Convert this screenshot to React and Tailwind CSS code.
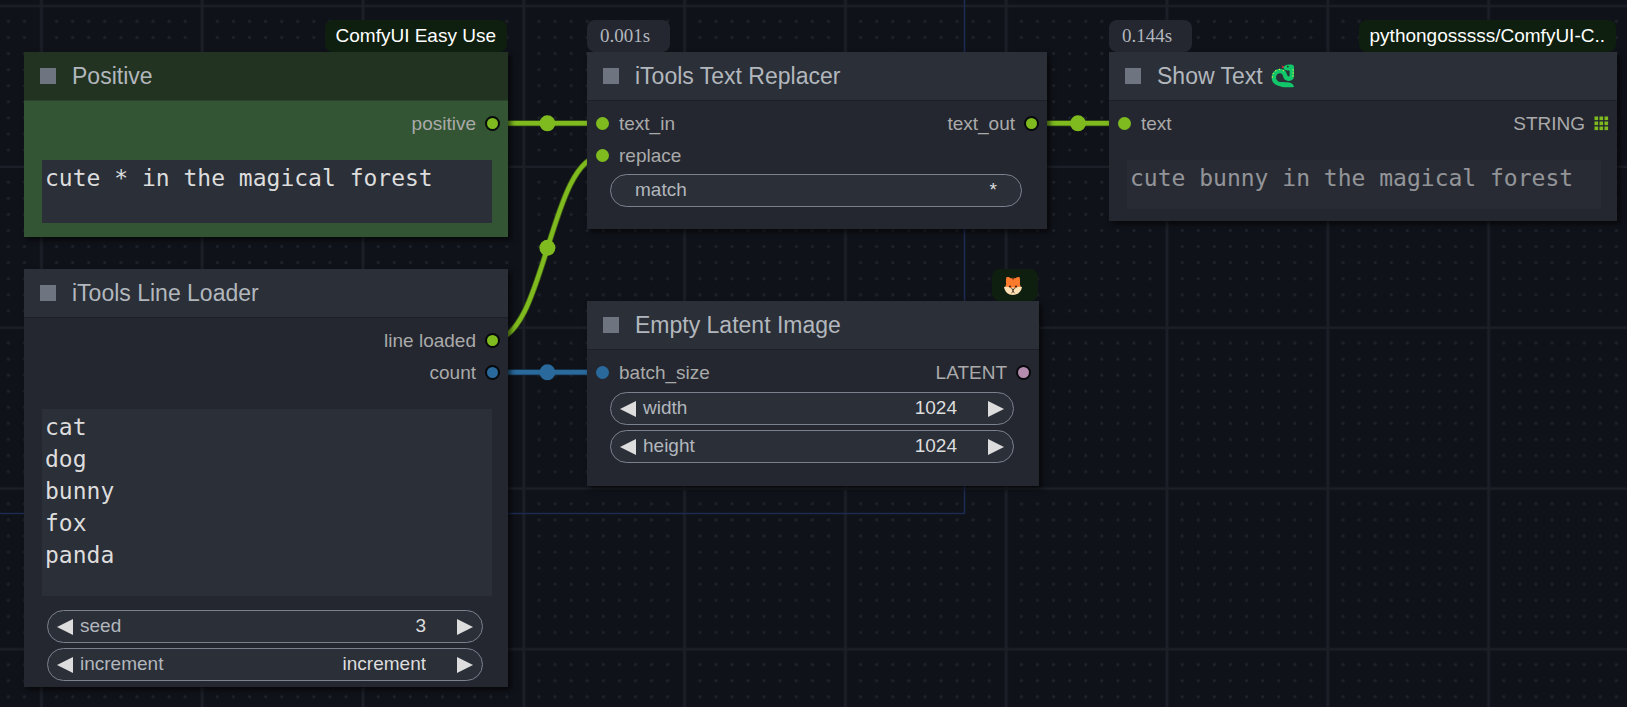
import React, { useId, useState } from "react";

const DOT_COORDS = Array.from({ length: 9 }, (_, i) => 15.2 + i * 16.08);

function CanvasGrid() {
  return (
    <svg className="absolute inset-0 h-full w-full" aria-hidden="true">
      <defs>
        <pattern id="grid" x="41.4" y="6.2" width="160.8" height="160.8" patternUnits="userSpaceOnUse">
          <rect x="0" y="0" width="160.8" height="1.1" fill="#1c1f27" />
          <rect x="0" y="159.5" width="160.8" height="1.3" fill="#1c1f27" />
          <rect x="0" y="0" width="1.4" height="160.8" fill="#1c1f27" />
          <rect x="159.4" y="0" width="1.4" height="160.8" fill="#1c1f27" />
          {DOT_COORDS.map((y) =>
            DOT_COORDS.map((x) => <circle key={`${x}-${y}`} cx={x} cy={y} r="1.6" fill="#1f2229" />)
          )}
        </pattern>
      </defs>
      <rect width="100%" height="100%" fill="url(#grid)" />
      <path d="M964.5 0V513.5H0" fill="none" stroke="#1e2b50" strokeWidth="1.6" />
    </svg>
  );
}

function Link({ d, cx, cy, color, edge }) {
  return (
    <g>
      <path d={d} fill="none" stroke={edge} strokeWidth="6" />
      <path d={d} fill="none" stroke={color} strokeWidth="4.4" />
      <circle cx={cx} cy={cy} r="8" fill={color} />
    </g>
  );
}

function Links() {
  return (
    <svg className="absolute inset-0 h-full w-full" aria-hidden="true">
      <Link d="M492 123.3H603" cx="547.4" cy="123.3" color="#7fbb1f" edge="#3d5a14" />
      <Link d="M492 340.3C546 340.3 549 155.5 603 155.5" cx="547.4" cy="247.8" color="#7fbb1f" edge="#3d5a14" />
      <Link d="M492 372.3H603" cx="547.4" cy="372.3" color="#29699c" edge="#1a3a55" />
      <Link d="M1030 123.3H1125" cx="1078" cy="123.3" color="#7fbb1f" edge="#3d5a14" />
    </svg>
  );
}

function Snake() {
  return (
    <svg viewBox="0 0 24 24" className="h-6 w-6" role="img" aria-label="snake">
      <path d="M13.5 2.2 10.4 1.6 11.6 3 10.2 4.2 14 3.8Z" fill="#d3273e" />
      <path d="M20.8 4V11.5C20.8 15.6 15 15.8 14.2 11.8C13.4 8 11.5 6.8 8.6 7C4.6 7.4 2.6 10.6 2.9 14.2C3.4 18.4 7.4 20.6 12 20.4" fill="none" stroke="#12c66a" strokeWidth="4.4" strokeLinecap="round" />
      <path d="M10.500 18C14 18.400 18 17.800 20.500 19.200C22 20.200 22.800 21.600 23 23C18 23.600 13 23.400 9.500 22.400Z" fill="#12c66a" />
      <path d="M12.600 3.600C13 1.200 15.500.4 18 .4H20C22 .4 23 1.400 23 3.400V6.400H15.800C13.800 6.200 12.400 5.400 12.600 3.600Z" fill="#12c66a" />
      <circle cx="16.800" cy="2.600" r=".9" fill="#17352a" />
      <g fill="#e8e64a">
        <circle cx="22.200" cy="6" r=".7" />
        <circle cx="22.200" cy="9" r=".7" />
        <circle cx="22" cy="12" r=".7" />
        <circle cx="8.500" cy="5.400" r=".7" />
        <circle cx="4.800" cy="6.800" r=".7" />
        <circle cx="2.200" cy="9.600" r=".7" />
        <circle cx="1.400" cy="13" r=".7" />
        <circle cx="12.400" cy="6.600" r=".7" />
      </g>
    </svg>
  );
}

function Fox() {
  return (
    <svg viewBox="0 0 20 20" className="mr-1 h-5 w-5" role="img" aria-label="fox">
      <path d="M3.400 1.200C5 .6 6.600 1.200 7.600 2.200H12.400C13.400 1.200 15 .6 16.600 1.200C17.200 3 17.100 6 16.900 8L18 12H2L3.100 8C2.900 6 2.800 3 3.400 1.200Z" fill="#fb7a2c" />
      <path d="M8.600 1.800H11.400L10 4.400Z" fill="#8c3a18" />
      <path d="M1 11C3.500 10.500 6.500 10.600 8.400 12.800L10 10.800 11.600 12.800C13.500 10.600 16.500 10.500 19 11C18.200 16 14.600 19 10 19S1.800 16 1 11Z" fill="#fde0b4" />
      <circle cx="7" cy="10.400" r="1" fill="#2c1b14" />
      <circle cx="13" cy="10.400" r="1" fill="#2c1b14" />
      <path d="M8.400 12.800H11.600L10 14.600Z" fill="#2c1b14" />
      <path d="M10 14V15.400M10 15.400 8.500 16.800M10 15.400 11.500 16.800" stroke="#2c1b14" strokeWidth="1" fill="none" />
    </svg>
  );
}

function TimeBadge({ children }) {
  return (
    <span className="flex h-8 items-center rounded-lg bg-[#242730] pr-5 pl-[13px] font-['Liberation_Serif',serif] text-[19px] text-[#b2b7bd]">
      {children}
    </span>
  );
}

function SourceBadge({ children }) {
  return (
    <span className="mr-px ml-auto flex h-8 items-center rounded-lg bg-[#0f1f0f] px-[11px] pt-px text-[19px] whitespace-nowrap text-white">
      {children}
    </span>
  );
}

function Node({ title, icon, place, time, source, green, children }) {
  return (
    <section className={`absolute ${place}`}>
      {(time || source) && (
        <div className="flex h-8">
          {time && <TimeBadge>{time}</TimeBadge>}
          {source && <SourceBadge>{source}</SourceBadge>}
        </div>
      )}
      <div className={`shadow-[3px_3px_5px_rgba(0,0,0,0.6)] ${green ? "bg-[#335533]" : "bg-[#242730]"}`}>
        <header
          className={`flex h-[49px] items-center gap-4 border-b px-4 ${
            green ? "border-[#2a432a] bg-[#223322]" : "border-[#1c1f26] bg-[#2b2f38]"
          }`}
        >
          <button type="button" aria-label={`Collapse ${title}`} className="size-4 bg-[#6e7581]" />
          <h2 className="flex items-center gap-2 text-[23px] leading-8 whitespace-nowrap text-[#b2b7bd]">
            {title}
            {icon}
          </h2>
        </header>
        {children}
      </div>
    </section>
  );
}

function Port({ color, output }) {
  return (
    <span className="flex size-[15px] items-center justify-center">
      <span className={`rounded-full ${output ? "size-[15px] border-2 border-[#07090b]" : "size-[13px]"} ${color}`} />
    </span>
  );
}

function Slots({ rows }) {
  return (
    <ul className="px-2 pt-[6px] text-[19px] text-[#aaaaaa]">
      {rows.map((row, i) => (
        <li key={i} className="flex h-8 items-center">
          {row.in && (
            <span className="flex items-center gap-[9px]">
              <Port color={row.inColor} />
              <span className="pt-[3px]">{row.in}</span>
            </span>
          )}
          {row.out && (
            <span className="ml-auto flex items-center gap-[9px]">
              <span className="pt-[3px]">{row.out}</span>
              {row.grid ? <GridPort /> : <Port color={row.outColor} output />}
            </span>
          )}
        </li>
      ))}
    </ul>
  );
}

function GridPort() {
  return (
    <svg viewBox="0 0 15 15" className="size-[15px]" aria-hidden="true" fill="#7fbb1f">
      {[0, 5, 10].map((y) => [0, 5, 10].map((x) => <rect key={`${x}-${y}`} x={x + 0.5} y={y + 0.5} width="3.6" height="3.6" />))}
    </svg>
  );
}

function TextBox({ label, value, box }) {
  const [text, setText] = useState(value);
  return (
    <textarea
      aria-label={label}
      value={text}
      onChange={(e) => setText(e.target.value)}
      spellCheck={false}
      className={`block w-full resize-none overflow-hidden bg-[#2b2f38] px-[3px] py-0.5 font-['DejaVu_Sans_Mono',monospace] text-[23px] leading-8 text-[#dddddd] outline-none ${box}`}
    />
  );
}

const PILL = "flex h-[33px] items-center rounded-full border border-[#7b828e] bg-[#2b2f38] text-[19px] text-[#b2b7bd]";

function ArrowButton({ label, right, onClick }) {
  return (
    <button type="button" aria-label={label} onClick={onClick} className="shrink-0">
      <svg viewBox="0 0 16 16" className="block size-4" fill="#dddddd">
        {right ? <path d="M0 0 16 8 0 16Z" /> : <path d="M16 0 0 8 16 16Z" />}
      </svg>
    </button>
  );
}

function NumberWidget({ name, initial, step = 1 }) {
  const id = useId();
  const [value, setValue] = useState(initial);
  return (
    <div className={`${PILL} px-[9px]`}>
      <ArrowButton label={`Decrease ${name}`} onClick={() => setValue(Number(value) - step)} />
      <label htmlFor={id} className="ml-[7px]">
        {name}
      </label>
      <input
        id={id}
        value={value}
        onChange={(e) => setValue(e.target.value)}
        className="mr-[31px] min-w-0 flex-1 bg-transparent text-right text-[#dddddd] outline-none"
      />
      <ArrowButton label={`Increase ${name}`} right onClick={() => setValue(Number(value) + step)} />
    </div>
  );
}

const MODES = ["fixed", "increment", "decrement", "randomize"];

function ComboWidget({ name, initial }) {
  const id = useId();
  const [value, setValue] = useState(initial);
  const move = (by) => setValue(MODES[(MODES.indexOf(value) + by + MODES.length) % MODES.length]);
  return (
    <div className={`${PILL} px-[9px]`}>
      <ArrowButton label={`Previous ${name}`} onClick={() => move(-1)} />
      <label htmlFor={id} className="ml-[7px]">
        {name}
      </label>
      <select
        id={id}
        value={value}
        onChange={(e) => setValue(e.target.value)}
        className="mr-[31px] min-w-0 flex-1 appearance-none bg-transparent text-right text-[#dddddd] outline-none [text-align-last:right]"
      >
        {MODES.map((mode) => (
          <option key={mode}>{mode}</option>
        ))}
      </select>
      <ArrowButton label={`Next ${name}`} right onClick={() => move(1)} />
    </div>
  );
}

function TextWidget({ name, initial }) {
  const id = useId();
  const [value, setValue] = useState(initial);
  return (
    <div className={`${PILL} px-6`}>
      <label htmlFor={id}>{name}</label>
      <input
        id={id}
        value={value}
        onChange={(e) => setValue(e.target.value)}
        className="min-w-0 flex-1 bg-transparent text-right text-[#dddddd] outline-none"
      />
    </div>
  );
}

const GREEN = "bg-[#7fbb1f]";
const BLUE = "bg-[#29699c]";
const PINK = "bg-[#b38cae]";

export default function App() {
  return (
    <main className="relative min-h-screen w-full overflow-hidden bg-[#0f1219] font-['Liberation_Sans',Arial,sans-serif]">
      <CanvasGrid />
      <Links />

      <Node title="Positive" source="ComfyUI Easy Use" green place="top-5 left-6 w-[484px]">
        <Slots rows={[{ out: "positive", outColor: GREEN }]} />
        <div className="pt-[21px] pr-4 pb-[14px] pl-[18px]">
          <TextBox label="Positive prompt" value="cute * in the magical forest" box="h-[63px]" />
        </div>
      </Node>

      <Node title="iTools Line Loader" place="top-[269px] left-6 w-[484px]">
        <Slots
          rows={[
            { out: "line loaded", outColor: GREEN },
            { out: "count", outColor: BLUE },
          ]}
        />
        <div className="pt-[21px] pr-4 pl-[18px]">
          <TextBox label="Lines" value={"cat\ndog\nbunny\nfox\npanda"} box="h-[187px]" />
        </div>
        <div className="flex flex-col gap-[5px] pt-[14px] pr-[25px] pb-[6px] pl-[23px]">
          <NumberWidget name="seed" initial={3} />
          <ComboWidget name="increment" initial="increment" />
        </div>
      </Node>

      <Node title="iTools Text Replacer" time="0.001s" place="top-5 left-[587px] w-[460px]">
        <Slots
          rows={[
            { in: "text_in", inColor: GREEN, out: "text_out", outColor: GREEN },
            { in: "replace", inColor: GREEN },
          ]}
        />
        <div className="pt-[3px] pr-[25px] pb-[22px] pl-[23px]">
          <TextWidget name="match" initial="*" />
        </div>
      </Node>

      <Node title="Empty Latent Image" source={<Fox />} place="top-[269px] left-[587px] w-[452px]">
        <Slots rows={[{ in: "batch_size", inColor: BLUE, out: "LATENT", outColor: PINK }]} />
        <div className="flex flex-col gap-[5px] pt-1 pr-[25px] pb-[23px] pl-[23px]">
          <NumberWidget name="width" initial={1024} step={8} />
          <NumberWidget name="height" initial={1024} step={8} />
        </div>
      </Node>

      <Node
        title="Show Text"
        icon={<Snake />}
        time="0.144s"
        source="pythongosssss/ComfyUI-C.."
        place="top-5 left-[1109px] w-[508px]"
      >
        <Slots rows={[{ in: "text", inColor: GREEN, out: "STRING", grid: true }]} />
        <div className="pt-[21px] pr-4 pb-3 pl-[18px]">
          <TextBox label="Text" value="cute bunny in the magical forest" box="h-[49px] opacity-60" />
        </div>
      </Node>
    </main>
  );
}
